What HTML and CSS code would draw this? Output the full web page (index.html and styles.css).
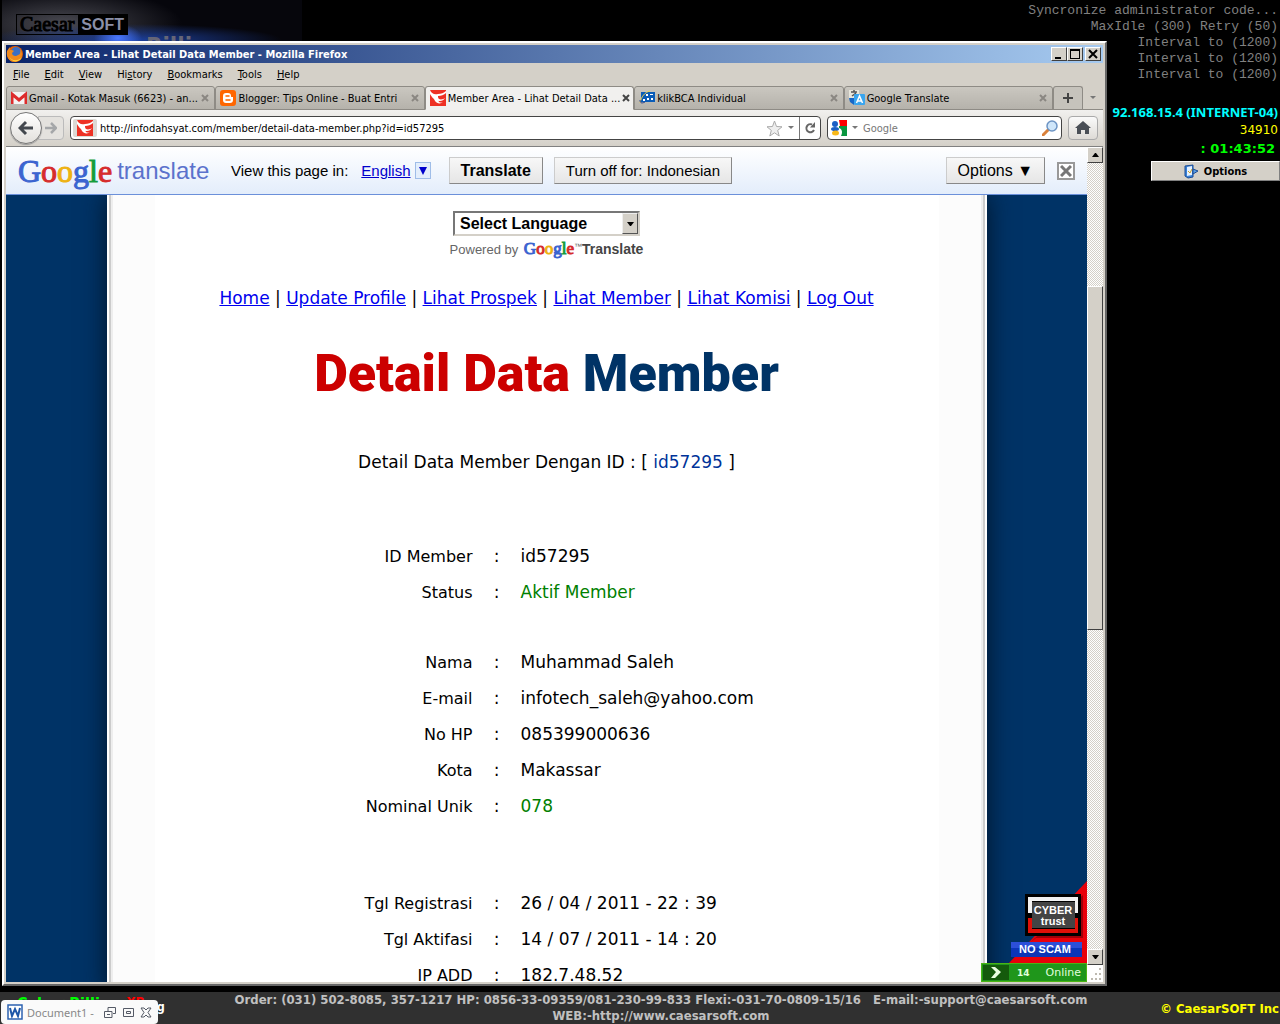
FILE: index.html
```html
<!DOCTYPE html>
<html lang="id">
<head>
    <meta charset="UTF-8">
    <meta name="viewport" content="width=device-width, initial-scale=1.0">
    <title>Member Area - Lihat Detail Data Member</title>
    <link rel="stylesheet" href="styles.css">
</head>
<body>
    <svg class="sprite" aria-hidden="true">
        <symbol id="bird" viewBox="0 0 16 16">
            <rect width="16" height="16" fill="#ee3124"/>
            <path d="M0 0c1 3 4 5 8 4 3 0 6-1 8-3v2c-2 2-5 3-8 3 0 1 0 2 1 3 2 1 5 0 6-1-1 2-3 3-5 3-1 0-2 0-2-1 1 3 3 3 5 2-2 2-6 2-8-1C4 8 2 8 0 4z" fill="#fff"/>
        </symbol>
    </svg>

    <div class="desktop">
        <div class="main">
            <header class="banner">
                <div class="caesar"><span>Caesar</span><b>SOFT</b></div>
                <div class="billing">Billing</div>
            </header>

            <div class="window">
                <div class="titlebar">
                    <svg width="18" height="18" viewBox="0 0 18 18">
                        <circle cx="9" cy="9" r="8" fill="#e66000"/>
                        <circle cx="10" cy="7" r="5" fill="#3b6fc4"/>
                        <path d="M1 6c1-1 2-3 3-4v3c2 0 3 0 4 1L6 8c0 3 4 4 6 2 2 0 3-3 2-6 4 5 2 12-5 13C3 17 0 12 1 6z" fill="#f08a1d"/>
                        <path d="M3 11c2 5 9 6 13 1-2 6-11 6-13-1z" fill="#ffd23c"/>
                    </svg>
                    <span class="caption">Member Area - Lihat Detail Data Member - Mozilla Firefox</span>
                    <button class="winbtn" aria-label="Minimize"><svg width="10" height="10"><path d="M1 8h6v2H1z"/></svg></button>
                    <button class="winbtn" aria-label="Maximize"><svg width="10" height="10"><path d="M0 0h10v10H0zM1 2v7h8V2z" fill-rule="evenodd"/></svg></button>
                    <button class="winbtn last" aria-label="Close"><svg width="10" height="10"><path d="M1 1l8 8M9 1l-8 8" stroke="#000" stroke-width="2"/></svg></button>
                </div>

                <nav class="menu">
                    <a href="#"><u>F</u>ile</a>
                    <a href="#"><u>E</u>dit</a>
                    <a href="#"><u>V</u>iew</a>
                    <a href="#">Hi<u>s</u>tory</a>
                    <a href="#"><u>B</u>ookmarks</a>
                    <a href="#"><u>T</u>ools</a>
                    <a href="#"><u>H</u>elp</a>
                </nav>

                <div class="tabs">
                    <div class="tab">
                        <svg width="16" height="16" viewBox="0 0 16 16"><rect y="2" width="16" height="12" fill="#f4f4f4"/><path d="M1 14V4l7 6 7-6v10" fill="none" stroke="#dd2c2c" stroke-width="3"/></svg>
                        <span>Gmail - Kotak Masuk (6623) - an...</span>
                        <button class="close" aria-label="Close tab"><svg width="8" height="8"><path d="M1 1l6 6M7 1L1 7"/></svg></button>
                    </div>
                    <div class="tab">
                        <svg width="16" height="16" viewBox="0 0 16 16"><rect width="16" height="16" rx="3" fill="#ff6600"/><path d="M6 3h2a3 3 0 0 1 3 3c0 1 0 1 2 1v3a3 3 0 0 1-3 3H6a3 3 0 0 1-3-3V6a3 3 0 0 1 3-3z" fill="#fff"/><path d="M6 6h3M6 10h4" stroke="#ff6600" stroke-width="1.5" stroke-linecap="round"/></svg>
                        <span>Blogger: Tips Online - Buat Entri</span>
                        <button class="close" aria-label="Close tab"><svg width="8" height="8"><path d="M1 1l6 6M7 1L1 7"/></svg></button>
                    </div>
                    <div class="tab active">
                        <svg width="16" height="16"><use href="#bird"/></svg>
                        <span>Member Area - Lihat Detail Data ...</span>
                        <button class="close" aria-label="Close tab"><svg width="8" height="8"><path d="M1 1l6 6M7 1L1 7"/></svg></button>
                    </div>
                    <div class="tab">
                        <svg width="16" height="16" viewBox="0 0 16 16"><rect x="2" y="2" width="14" height="10" fill="#0a5cb8"/><path d="M4 9h2v2H4zM8 8h2v2H8zM12 8h2v2h-2zM7 4h2v2H7zM11 4h3v1h-3z" fill="#fff"/><path d="M1 13C2 7 6 2 11 1" fill="none" stroke="#e9d24a"/><path d="M1 10c0 4 3 3 5 2" fill="none" stroke="#223a8c"/></svg>
                        <span>klikBCA Individual</span>
                        <button class="close" aria-label="Close tab"><svg width="8" height="8"><path d="M1 1l6 6M7 1L1 7"/></svg></button>
                    </div>
                    <div class="tab">
                        <svg width="16" height="16" viewBox="0 0 16 16"><rect width="10" height="9" fill="#e8e6dc"/><path d="M2 2h6M5 0v2M3 6l4-3" stroke="#555" stroke-width="1.5"/><path d="M0 8h5v7l-4-3z" fill="#1767c8"/><rect x="5" y="4" width="11" height="11" rx="1" fill="#3aa5ee"/><path d="M7.500 13l3-7 3 7M8.500 11h4" fill="none" stroke="#fff" stroke-width="1.500"/></svg>
                        <span>Google Translate</span>
                        <button class="close" aria-label="Close tab"><svg width="8" height="8"><path d="M1 1l6 6M7 1L1 7"/></svg></button>
                    </div>
                    <button class="newtab" aria-label="New tab"><svg width="10" height="10"><path d="M5 0v10M0 5h10" stroke="#444" stroke-width="2"/></svg></button>
                    <button class="alltabs" aria-label="List all tabs"><svg width="6" height="4"><path d="M0 0h6L3 3z" fill="#777"/></svg></button>
                </div>

                <div class="toolbar">
                    <div class="history">
                        <button class="back" aria-label="Back"><svg width="16" height="16" viewBox="0 0 16 16"><path d="M8 2L2 8l6 6M2 8h13" fill="none" stroke="#43484e" stroke-width="3"/></svg></button>
                        <button class="forward" aria-label="Forward"><svg width="12" height="12" viewBox="0 0 12 12"><path d="M6 1l5 5-5 5M11 6H0" fill="none" stroke="#a5a7a9" stroke-width="2.500"/></svg></button>
                    </div>
                    <div class="field url">
                        <span class="identity"><svg width="16" height="16"><use href="#bird"/></svg></span>
                        <input type="text" aria-label="Address" value="http://infodahsyat.com/member/detail-data-member.php?id=id57295">
                        <button class="plain" aria-label="Bookmark"><svg width="17" height="17" viewBox="0 0 17 17"><path d="M8.500 1l2 5.500 5.500.3-4.300 3.600 1.500 5.600-4.700-3.200L3.800 16l1.500-5.600L1 6.800l5.500-.3z" fill="#eee" stroke="#aaa"/></svg></button>
                        <button class="plain drop" aria-label="Show history"><svg width="6" height="4"><path d="M0 0h6L3 3z" fill="#777"/></svg></button>
                        <button class="plain reload" aria-label="Reload"><svg width="12" height="12" viewBox="0 0 12 12"><path d="M8 2.500a4 4 0 1 0 2 5.500" fill="none" stroke="#666" stroke-width="2"/><path d="M11 0v5.500H6z" fill="#666"/></svg></button>
                    </div>
                    <div class="field search">
                        <svg width="16" height="16" viewBox="0 0 16 16"><path d="M8 0h8v6H9z" fill="#f00"/><path d="M8 6h8v10H10c2-4 1-7-2-8z" fill="#0a9640"/><circle cx="4" cy="4" r="3" fill="#1d5fc4"/><ellipse cx="4" cy="9" rx="4" ry="2" fill="#1d5fc4"/><ellipse cx="4.500" cy="13" rx="3.500" ry="2.500" fill="#f8b818"/></svg>
                        <svg width="6" height="4"><path d="M0 0h6L3 3z" fill="#777"/></svg>
                        <input type="text" aria-label="Search" placeholder="Google">
                        <button class="plain" aria-label="Search"><svg width="16" height="16" viewBox="0 0 16 16"><path d="M7 9l-6 6" stroke="#d9803a" stroke-width="3" stroke-linecap="round"/><circle cx="10" cy="6" r="5" fill="#cfe6fa" stroke="#6d94c4" stroke-width="1.500"/></svg></button>
                    </div>
                    <button class="home" aria-label="Home"><svg width="16" height="14" viewBox="0 0 16 14"><path d="M8 0l8 7h-2v6H10V9H6v4H2V7H0z" fill="#4a4f56"/></svg></button>
                </div>

                <div class="content">
                    <div class="view">
                        <div class="gbar">
                            <div class="glogo">
                                <span class="google"><i>G</i><i>o</i><i>o</i><i>g</i><i>l</i><i>e</i></span>
                                <span class="word">translate</span>
                            </div>
                            <span class="viewin">View this page in:</span>
                            <a href="#">English</a>
                            <button class="pick" aria-label="Choose language"><svg width="8" height="8"><path d="M0 0h8L4 8z" fill="#0000cc"/></svg></button>
                            <button class="gbtn strong">Translate</button>
                            <button class="gbtn">Turn off for: Indonesian</button>
                            <button class="gbtn options">Options ▼</button>
                            <button class="dismiss" aria-label="Close"><svg width="12" height="12"><path d="M1 1l10 10M11 1L1 11" stroke="#777" stroke-width="3"/></svg></button>
                        </div>

                        <div class="page">
                            <main class="sheet">
                                <div class="selectbox">
                                    <select aria-label="Select Language">
                                        <option>Select Language</option>
                                    </select>
                                    <svg class="arrow" width="16" height="21"><path d="M4 8h7L8 12H7z"/></svg>
                                </div>
                                <p class="powered">Powered by <span class="google"><i>G</i><i>o</i><i>o</i><i>g</i><i>l</i><i>e</i></span><sup>™</sup><b>Translate</b></p>
                                <nav class="links">
                                    <a href="#">Home</a> | <a href="#">Update Profile</a> | <a href="#">Lihat Prospek</a> | <a href="#">Lihat Member</a> | <a href="#">Lihat Komisi</a> | <a href="#">Log Out</a>
                                </nav>
                                <h1>Detail Data <span>Member</span></h1>
                                <p class="sub">Detail Data Member Dengan ID : [ <span>id57295</span> ]</p>
                                <table class="detail">
                                    <tbody>
                                        <tr><th>ID Member</th><td class="colon">:</td><td>id57295</td></tr>
                                        <tr><th>Status</th><td class="colon">:</td><td class="green">Aktif Member</td></tr>
                                    </tbody>
                                    <tbody class="person">
                                        <tr><th>Nama</th><td class="colon">:</td><td>Muhammad Saleh</td></tr>
                                        <tr><th>E-mail</th><td class="colon">:</td><td>infotech_saleh@yahoo.com</td></tr>
                                        <tr><th>No HP</th><td class="colon">:</td><td>085399000636</td></tr>
                                        <tr><th>Kota</th><td class="colon">:</td><td>Makassar</td></tr>
                                        <tr><th>Nominal Unik</th><td class="colon">:</td><td class="green">078</td></tr>
                                    </tbody>
                                    <tbody class="dates">
                                        <tr><th>Tgl Registrasi</th><td class="colon">:</td><td>26 / 04 / 2011 - 22 : 39</td></tr>
                                        <tr><th>Tgl Aktifasi</th><td class="colon">:</td><td>14 / 07 / 2011 - 14 : 20</td></tr>
                                        <tr><th>IP ADD</th><td class="colon">:</td><td>182.7.48.52</td></tr>
                                    </tbody>
                                </table>
                            </main>
                        </div>

                        <div class="badges">
                            <svg width="78" height="82" viewBox="0 0 78 82">
                                <path d="M78 0v82H0z" fill="#e8000a"/>
                                <path d="M74 14v43H27l-5 4 4-4z" fill="#a00008"/>
                                <rect x="16" y="13" width="56" height="42" fill="#000"/>
                                <path d="M19 16h50v16h-3V20H23v12h-4z" fill="#f2f2f2"/>
                                <path d="M19 37h4v11h43V37h3v15H19z" fill="#e01008"/>
                                <rect x="23" y="21" width="43" height="26" fill="#444"/>
                                <text x="44" y="33" class="seal">CYBER</text>
                                <text x="44" y="44" class="seal">trust</text>
                                <rect x="2" y="61" width="71" height="15" fill="#0c35b8"/>
                                <rect x="2" y="61" width="71" height="6" fill="#2c4fd8"/>
                                <text x="36" y="72" class="noscam">NO SCAM</text>
                            </svg>
                            <div class="online">
                                <svg width="26" height="15"><rect width="26" height="15" fill="#145a0c"/><path d="M8 2h4l6 5-6 6H8l5-6z" fill="#e8ffe0"/></svg>
                                <b>14</b><span>Online</span>
                            </div>
                        </div>
                    </div>

                    <div class="scroll">
                        <button aria-label="Scroll up"><svg width="7" height="4"><path d="M0 4h7L4 0H3z"/></svg></button>
                        <div class="before"></div>
                        <div class="thumb"></div>
                        <div class="after"></div>
                        <button aria-label="Scroll down"><svg width="7" height="4"><path d="M0 0h7L4 4H3z"/></svg></button>
                        <svg class="grip" width="16" height="17"><path d="M12 3h2v2h-2zM12 8h2v2h-2zM12 13h2v2h-2zM8 8h2v2H8zM8 13h2v2H8zM4 13h2v2H4z" fill="#bdb9b0"/></svg>
                    </div>
                </div>
            </div>
        </div>

        <aside class="side">
            <div class="log">
                <p>Syncronize administrator code...</p>
                <p>MaxIdle (300) Retry (50)</p>
                <p>Interval to (1200)</p>
                <p>Interval to (1200)</p>
                <p>Interval to (1200)</p>
            </div>
            <p class="ip">92.168.15.4 (INTERNET-04)</p>
            <p class="cost">34910</p>
            <p class="timer">: 01:43:52</p>
            <button class="sideopt">
                <svg width="15" height="15" viewBox="0 0 15 15"><path d="M1 2l8-1v12l-5 1-3-2z" fill="#3a82d8" stroke="#1c4c94"/><path d="M3 3l5-1v9l-5 1z" fill="#e4f1ff"/><path d="M4 7l2 2 2-4" fill="none" stroke="#d0a020"/><path d="M9 5l5 2-5 3z" fill="#5aa0e8" stroke="#1c4c94"/></svg>
                Options
            </button>
        </aside>
    </div>

    <footer class="bar">
        <div class="product"><span>Cyber Billing</span><em>XP</em><small>g</small></div>
        <div class="contact">
            <p>Order: (031) 502-8085, 357-1217 HP: 0856-33-09359/081-230-99-833 Flexi:-031-70-0809-15/16 &nbsp; E-mail:-support@caesarsoft.com</p>
            <p>WEB:-http://www.caesarsoft.com</p>
        </div>
        <div class="copy">© CaesarSOFT Inc</div>
        <div class="doc">
            <svg width="16" height="16" viewBox="0 0 16 16"><rect x="1" y="1" width="14" height="14" fill="#fff" stroke="#2c62b0" stroke-width="1.500"/><path d="M3 4l2 8 3-7 3 7 2-8" fill="none" stroke="#1d56a8" stroke-width="2"/></svg>
            <span>Document1 -</span>
            <button aria-label="Restore"><svg width="12" height="11"><path d="M4 .5h7.500v6H9M.5 4.500H8v6H.5zM3 7.500h3M4 .5v4" fill="none" stroke="#555a66"/></svg></button>
            <button aria-label="Maximize"><svg width="12" height="11"><path d="M1.500 1.500h10v8h-10zM4.500 4.500h4v2h-4z" fill="none" stroke="#555a66"/></svg></button>
            <button aria-label="Close"><svg width="12" height="11"><path d="M1 1h3l2 2 2-2h3L8 5.500 11 10H8L6 8l-2 2H1l3-4.500z" fill="none" stroke="#555a66"/></svg></button>
        </div>
    </footer>
</body>
</html>
```
FILE: styles.css
```css
* {
    box-sizing: border-box;
}
body {
    margin: 0;
    height: 100vh;
    display: flex;
    flex-direction: column;
    overflow: hidden;
    background: #000;
    color: #000;
    font-family: "DejaVu Sans Condensed", "DejaVu Sans", sans-serif;
    font-size: 11px;
}
p {
    margin: 0;
}
button {
    display: flex;
    align-items: center;
    justify-content: center;
    padding: 0;
    font-family: inherit;
    color: inherit;
}
svg {
    display: block;
    flex: none;
}
.sprite {
    position: absolute;
    width: 0;
    height: 0;
}
.desktop {
    flex: 1;
    display: flex;
    min-height: 0;
    padding-bottom: 6px;
}
.main {
    flex: 1;
    min-width: 0;
    display: flex;
    flex-direction: column;
    padding-left: 2px;
}

/* billing banner */
.banner {
    height: 41px;
    flex: none;
    width: 300px;
    padding: 14px 0 0 14px;
    overflow: hidden;
    background: radial-gradient(ellipse 24px 14px at 116px 38px, #4a78ff, transparent),
                radial-gradient(ellipse 150px 16px at 130px 40px, #1c3f9c, transparent),
                radial-gradient(ellipse 120px 36px at 60px 24px, #4a4a52, transparent), #06060c;
}
.caesar {
    display: flex;
    width: 112px;
    height: 21px;
    border: 1px solid #000;
    font-family: "Liberation Serif", serif;
    font-size: 20px;
    line-height: 19px;
    color: #000;
}
.caesar span {
    flex: 1;
    padding-left: 3px;
    -webkit-text-stroke: 1px;
}
.caesar b {
    padding: 0 3px;
    background: #000;
    color: #8b90a8;
    font-family: "Liberation Sans", sans-serif;
    font-size: 16px;
}
.billing {
    padding-left: 130px;
    font-size: 24px;
    font-weight: bold;
    line-height: 24px;
    color: #667;
}

/* browser window */
.window {
    flex: 1;
    min-height: 0;
    display: flex;
    flex-direction: column;
    padding: 2px;
    background: #d4d0c8;
    border: 2px solid;
    border-color: #fff #666 #666 #fff;
}
.titlebar {
    display: flex;
    align-items: center;
    height: 18px;
    flex: none;
    padding-right: 2px;
    background: linear-gradient(to right, #0a246a, #a6caf0);
    color: #fff;
}
.caption {
    flex: 1;
    padding-left: 1px;
    font-weight: bold;
    white-space: nowrap;
}
.winbtn {
    width: 16px;
    height: 14px;
    background: #d4d0c8;
    border: 1px solid;
    border-color: #fff #404040 #404040 #fff;
}
.winbtn.last {
    margin-left: 2px;
}
.menu {
    display: flex;
    gap: 15px;
    height: 23px;
    flex: none;
    align-items: center;
    padding-left: 7px;
}
.menu a {
    color: #000;
    text-decoration: none;
}
.tabs {
    display: flex;
    height: 24px;
    flex: none;
    border-bottom: 1px solid #8e8b85;
}
.tab {
    flex: 1;
    min-width: 0;
    display: flex;
    align-items: center;
    gap: 2px;
    margin-bottom: -1px;
    padding: 0 5px 0 4px;
    background: linear-gradient(#cac7c0, #b5b2ab);
    border: 1px solid #8e8b85;
    border-radius: 3px 3px 0 0;
}
.tab span {
    flex: 1;
    white-space: nowrap;
}
.tab.active {
    background: #f1f0ee;
    border-bottom-color: #f1f0ee;
}
.close {
    border: 0;
    background: none;
    stroke: #8a8782;
    stroke-width: 2;
}
.active .close {
    stroke: #444;
}
.newtab {
    width: 30px;
    background: #c6c3bc;
    border: 1px solid #8e8b85;
    border-bottom: 0;
    border-radius: 3px 3px 0 0;
}
.alltabs {
    width: 20px;
    border: 0;
    background: none;
}
.toolbar {
    display: flex;
    align-items: center;
    gap: 6px;
    height: 37px;
    flex: none;
    padding: 0 5px 0 4px;
    background: linear-gradient(#f1f0ee, #d4d0c8);
    border-bottom: 1px solid #808080;
}
.history {
    display: flex;
    align-items: center;
    width: 54px;
}
.back {
    width: 32px;
    height: 32px;
    border: 1px solid #777;
    border-radius: 50%;
    background: linear-gradient(#fff, #e2e0dc);
    box-shadow: 0 1px 1px #999;
    z-index: 1;
}
.forward {
    width: 26px;
    height: 24px;
    margin-left: -4px;
    border: 1px solid #bbb;
    border-radius: 0 4px 4px 0;
    background: #e4e2de;
}
.field {
    display: flex;
    align-items: center;
    height: 24px;
    background: #fff;
    border: 1px solid #444;
    border-radius: 4px;
}
.field input {
    flex: 1;
    min-width: 0;
    padding: 0;
    border: 0;
    outline: 0;
    background: none;
    font-family: inherit;
    font-size: 11px;
}
.field input::placeholder {
    color: #777;
    opacity: 1;
}
.url {
    flex: 1;
    padding-left: 2px;
}
.identity {
    width: 24px;
    padding: 1px 4px;
    margin-right: 3px;
    border-radius: 2px;
    background: #dcd9d4;
}
.plain {
    border: 0;
    background: none;
}
.drop {
    width: 16px;
}
.reload {
    width: 21px;
    height: 22px;
    border-left: 1px solid #777;
}
.search {
    width: 235px;
    gap: 5px;
    padding: 0 3px;
}
.home {
    width: 30px;
    height: 24px;
    border: 1px solid #aaa;
    border-radius: 4px;
    background: linear-gradient(#fafafa, #dedbd6);
}

/* page area */
.content {
    flex: 1;
    min-height: 0;
    display: flex;
}
.view {
    position: relative;
    flex: 1;
    min-width: 0;
    display: flex;
    flex-direction: column;
    overflow: hidden;
}
.gbar {
    display: flex;
    align-items: center;
    height: 48px;
    flex: none;
    padding: 0 12px;
    background: linear-gradient(#fff, #e3edfb);
    border-bottom: 1px solid #6b90da;
    font-family: "Liberation Sans", sans-serif;
    font-size: 15px;
    white-space: nowrap;
}
.gbar a {
    color: #0000cc;
}
.glogo {
    display: flex;
    align-items: center;
    gap: 5px;
    width: 213px;
}
.google {
    font-family: "Liberation Serif", serif;
    font-size: 32px;
    line-height: 40px;
}
.google i {
    font-style: normal;
    color: #3b64d0;
    -webkit-text-stroke: 1px;
}
.google i:nth-child(2),
.google i:nth-child(6) {
    color: #d62c2c;
}
.google i:nth-child(3) {
    color: #eeb211;
}
.google i:nth-child(5) {
    color: #169c3c;
}
.word {
    color: #5b72cc;
    font-size: 24px;
}
.viewin {
    margin-right: 13px;
}
.pick {
    width: 16px;
    height: 17px;
    margin: 0 18px 0 4px;
    border: 1px solid #9fbde8;
    background: #e3eefc;
}
.gbtn {
    height: 27px;
    margin-right: 11px;
    padding: 0 11px;
    border: 1px solid;
    border-color: #ccc #888 #888 #ccc;
    background: linear-gradient(#f7f7f7, #e6e6e6);
    font-size: 15px;
}
.gbtn.strong {
    font-size: 16px;
    font-weight: bold;
}
.gbtn.options {
    margin: 0 12px 0 auto;
    font-size: 16px;
}
.dismiss {
    width: 18px;
    height: 18px;
    border: 2px solid #999;
    background: #fff;
}
.page {
    flex: 1;
    min-height: 0;
    overflow: hidden;
    background: #003366;
}
.sheet {
    max-width: 880px;
    min-height: 100%;
    margin: 0 auto;
    padding-top: 16px;
    background: linear-gradient(to right, #fcfcfc 46px, #fff 46px, #fff calc(100% - 46px), #fcfcfc calc(100% - 46px));
    border: solid #fff;
    border-width: 0 2px;
    box-shadow: 0 0 24px #001428, inset 2px 0 #ccc, inset -2px 0 #ccc, inset 4px 0 #eee, inset -4px 0 #eee;
    font-family: "DejaVu Sans", sans-serif;
    font-size: 16px;
    text-align: center;
}
.selectbox {
    display: flex;
    width: 187px;
    height: 25px;
    margin: 0 auto;
    border: 2px solid;
    border-color: #777 #d4d0c8 #d4d0c8 #777;
}
.selectbox select {
    flex: 1;
    min-width: 0;
    padding: 0 0 0 5px;
    appearance: none;
    border: 0;
    background: #fff;
    font-family: "Liberation Sans", sans-serif;
    font-size: 16px;
    font-weight: bold;
    color: #000;
}
.arrow {
    background: #d4d0c8;
    border: 1px solid;
    border-color: #eee #555 #555 #eee;
}
.powered {
    height: 26px;
    font-family: "Liberation Sans", sans-serif;
    font-size: 13px;
    line-height: 26px;
    color: #666;
}
.powered .google {
    padding-left: 2px;
    font-size: 17px;
    line-height: 20px;
}
.powered sup {
    font-size: 8px;
    line-height: 8px;
}
.powered b {
    color: #444;
    font-size: 14px;
}
.links {
    margin-top: 24px;
    font-size: 17px;
    line-height: 24px;
}
.links a {
    color: #0000ee;
}
h1 {
    margin: 26px 0 0;
    font-family: Impact, Roboto, sans-serif;
    font-size: 52px;
    font-weight: 900;
    line-height: 76px;
    color: #cc0000;
}
h1 span {
    color: #003366;
}
.sub {
    margin-top: 38px;
    font-size: 17px;
    line-height: 24px;
}
.sub span {
    color: #003399;
}
.detail {
    width: 100%;
    margin-top: 64px;
    border-collapse: collapse;
    table-layout: fixed;
    text-align: left;
}
.detail th {
    width: 364px;
    padding: 0;
    font-weight: normal;
    text-align: right;
}
.detail td {
    height: 36px;
    padding: 0;
    font-size: 17px;
}
.detail .colon {
    width: 48px;
    text-align: center;
}
.detail .green {
    color: #008000;
}
.person::before {
    content: "";
    display: block;
    height: 34px;
}
.dates::before {
    content: "";
    display: block;
    height: 61px;
}
.badges {
    position: absolute;
    right: 0;
    bottom: 0;
    display: flex;
    flex-direction: column;
    align-items: flex-end;
}
.seal,
.noscam {
    font-family: "Liberation Sans", sans-serif;
    font-size: 11px;
    font-weight: bold;
    fill: #fff;
    text-anchor: middle;
}
.online {
    display: flex;
    align-items: center;
    width: 106px;
    height: 19px;
    padding: 0 5px 0 1px;
    border: 1px solid #4cb414;
    background: #1f961b;
    color: #e0ffdc;
    font-family: "DejaVu Sans", sans-serif;
}
.online b {
    flex: 1;
    padding-left: 8px;
    font-size: 9px;
}
.scroll {
    width: 16px;
    display: flex;
    flex-direction: column;
    background: repeating-conic-gradient(#fff 0 25%, #d4d0c8 0 50%) 0 0 / 2px 2px;
}
.scroll button {
    height: 16px;
    background: #d4d0c8;
    border: 1px solid;
    border-color: #fff #404040 #404040 #fff;
}
.before {
    flex: 123;
}
.thumb {
    flex: 344;
    background: #d4d0c8;
    border: 1px solid;
    border-color: #fff #404040 #404040 #fff;
}
.after {
    flex: 320;
}
.grip {
    background: #fff;
}

/* right status column */
.side {
    width: 173px;
    display: flex;
    flex-direction: column;
    align-items: flex-end;
    padding-top: 3px;
    text-align: right;
    white-space: nowrap;
}
.log {
    padding-right: 2px;
    color: #808080;
    font-family: "Liberation Mono", monospace;
    font-size: 13px;
    line-height: 16px;
}
.ip {
    margin-top: 20px;
    padding-right: 2px;
    color: #00ffff;
    font-family: "Noto Sans", sans-serif;
    font-size: 13px;
    font-weight: bold;
    line-height: 18px;
}
.cost {
    padding-right: 2px;
    color: #ffff00;
    font-family: "DejaVu Sans", sans-serif;
    font-size: 12px;
    line-height: 18px;
}
.timer {
    padding-right: 5px;
    color: #00ff00;
    font-family: "DejaVu Sans", sans-serif;
    font-size: 13px;
    font-weight: bold;
    line-height: 20px;
}
.sideopt {
    gap: 5px;
    width: 129px;
    height: 20px;
    margin-top: 2px;
    background: #d4d0c8;
    border: 1px solid;
    border-color: #fff #808080 #808080 #fff;
    font-size: 11px;
    font-weight: bold;
}

/* bottom bar */
.bar {
    position: relative;
    display: flex;
    height: 32px;
    flex: none;
    background: #303030;
    font-weight: bold;
    white-space: nowrap;
}
.product {
    display: flex;
    width: 200px;
    padding: 2px 0 0 17px;
    color: #00ff00;
    font-size: 16px;
}
.product em {
    margin-left: 6px;
    color: #ff0000;
    font-size: 13px;
    font-style: normal;
}
.product small {
    margin: 6px 0 0 13px;
    color: #fff;
    font-size: 12px;
}
.contact {
    flex: 1;
    color: #c0c0c0;
    font-size: 13px;
    line-height: 16px;
    text-align: center;
}
.copy {
    width: 158px;
    padding: 8px 1px 0 0;
    color: #ffff00;
    font-size: 13px;
    line-height: 18px;
    text-align: right;
}
.doc {
    position: absolute;
    left: 1px;
    bottom: 0;
    display: flex;
    align-items: center;
    gap: 6px;
    height: 24px;
    padding: 0 6px;
    border-radius: 4px;
    background: #fafafa;
    color: #888;
    font-family: "Noto Sans", sans-serif;
    font-size: 11px;
    font-weight: normal;
}
.doc span {
    margin: 0 4px 0 -2px;
}
.doc button {
    border: 0;
    background: none;
}
```
